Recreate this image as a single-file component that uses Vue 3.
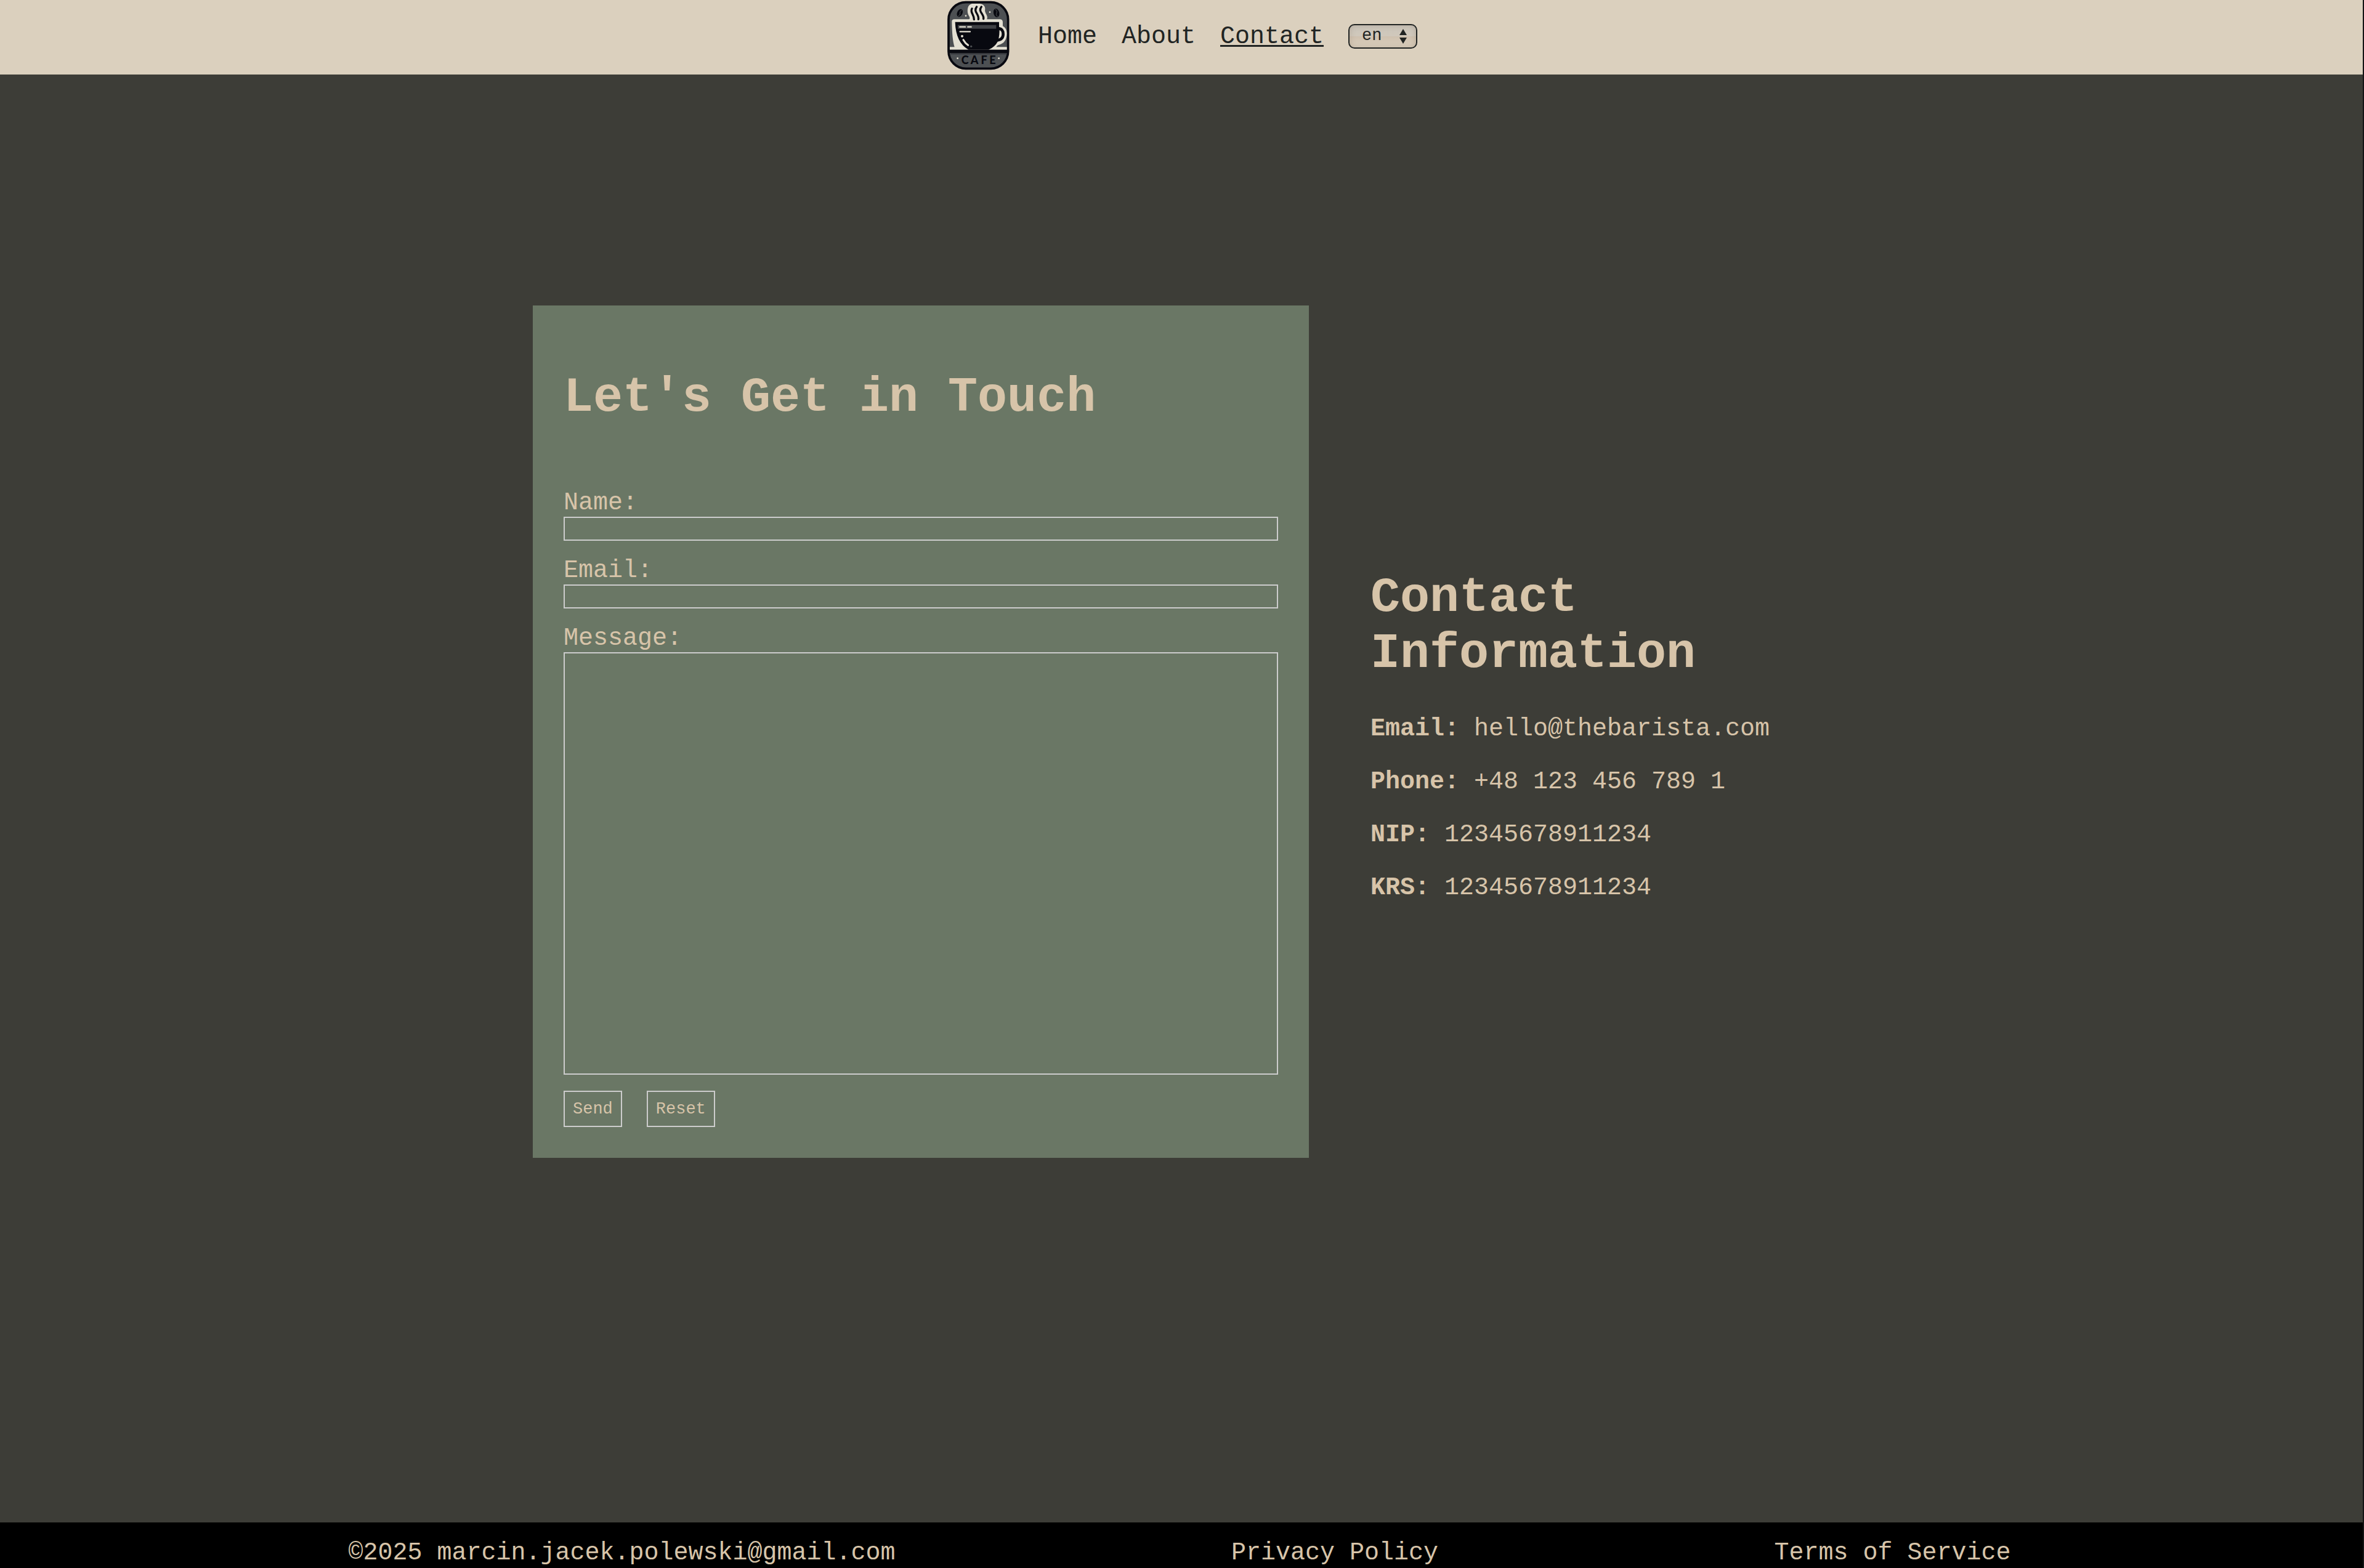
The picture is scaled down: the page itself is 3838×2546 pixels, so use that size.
<script setup>
import { ref } from 'vue'

const links = [
  { label: 'Home', href: '#home' },
  { label: 'About', href: '#about' },
  { label: 'Contact', href: '#contact', active: true },
]
const languages = ['en', 'pl']
const language = ref('en')

const details = [
  { label: 'Email', value: 'hello@thebarista.com' },
  { label: 'Phone', value: '+48 123 456 789 1' },
  { label: 'NIP', value: '12345678911234' },
  { label: 'KRS', value: '12345678911234' },
]

const form = ref({ name: '', email: '', message: '' })
</script>

<template>
  <div class="page">
    <header class="navbar">
      <svg class="logo" viewBox="48 0 330 360" role="img" aria-label="Cafe">
        <rect x="63" y="14" width="290" height="323" rx="84" fill="#4d5053" stroke="#080910" stroke-width="11" />
        <path
          d="M69 232 H92 Q80 195 79 108 Q79 97 91 97 H163 Q170 92 162 80 Q153 66 156 46 Q158 26 177 21 H215 Q238 23 241 44 Q238 56 244 68 Q255 84 250 97 H315 Q326 98 327 110 V130 Q346 140 347 165 Q346 212 309 221 Q301 222 295 232 H347 V246 H69 Z"
          fill="#e4e0d3"
        />
        <path d="M95 110 H309 V134 Q336 138 336 169 Q336 202 302 206 Q289 231 258 245 H160 Q98 210 95 110 Z" fill="#080910" />
        <path d="M311 150 Q322 153 322 169 Q322 186 307 191 Q311 171 311 150 Z" fill="#e4e0d3" />
        <rect x="108" y="125" width="187" height="18" fill="#3f4145" />
        <rect x="66" y="245" width="284" height="16" fill="#080910" />
        <path d="M72 261 H345 V268 H74 Z" fill="#35373c" />
        <g fill="none" stroke="#e4e0d3" stroke-linecap="round">
          <path d="M118 134 H144 M157 134 H173 M119 157 H168" stroke-width="7" />
          <path d="M135 197 Q144 213 158 223" stroke-width="9" />
        </g>
        <circle cx="129" cy="179" r="6" fill="#e4e0d3" />
        <circle cx="173" cy="229" r="5" fill="#4d5053" />
        <g fill="none" stroke="#080910" stroke-width="10" stroke-linecap="round">
          <path d="M177 45 C166 63 188 73 187 98" />
          <path d="M200 36 C181 61 214 72 208 97" />
          <path d="M223 36 C204 60 238 72 233 95" />
        </g>
        <g fill="#080910">
          <ellipse cx="118" cy="66" rx="13" ry="20" transform="rotate(25 118 66)" />
          <ellipse cx="296" cy="66" rx="14" ry="21" transform="rotate(-15 296 66)" />
        </g>
        <g fill="none" stroke="#4d5053" stroke-width="3">
          <path d="M127 52 Q114 62 119 68 Q121 75 109 82" />
          <path d="M292 48 Q303 60 297 67 Q291 73 301 84" />
        </g>
        <g fill="#e4e0d3">
          <circle cx="147" cy="80" r="4" />
          <circle cx="264" cy="62" r="4" />
          <circle cx="107" cy="287" r="4" />
          <circle cx="308" cy="287" r="4" />
        </g>
        <g class="logo-text" fill="#080910" text-anchor="middle">
          <text x="143" y="316">C</text>
          <text x="189" y="316">A</text>
          <text x="236" y="316">F</text>
          <text x="277" y="316">E</text>
        </g>
      </svg>
      <nav class="links">
        <a v-for="link in links" :key="link.label" :href="link.href" :class="{ active: link.active }">{{ link.label }}</a>
      </nav>
      <div class="language">
        <select v-model="language" aria-label="Language">
          <option v-for="code in languages" :key="code" :value="code">{{ code }}</option>
        </select>
        <svg class="arrows" viewBox="0 0 12 24" aria-hidden="true">
          <path d="M6 0 L12 10 H0 Z M0 14 H12 L6 24 Z" fill="#212423" />
        </svg>
      </div>
    </header>

    <main class="content">
      <div class="columns">
        <section class="card">
          <h1>Let's Get in Touch</h1>
          <form @submit.prevent>
            <div class="field">
              <label for="name">Name:</label>
              <input id="name" v-model="form.name" type="text" />
            </div>
            <div class="field">
              <label for="email">Email:</label>
              <input id="email" v-model="form.email" type="email" />
            </div>
            <div class="field">
              <label for="message">Message:</label>
              <textarea id="message" v-model="form.message"></textarea>
            </div>
            <div class="actions">
              <button type="submit">Send</button>
              <button type="reset">Reset</button>
            </div>
          </form>
        </section>
        <section class="info">
          <h1>Contact Information</h1>
          <p v-for="item in details" :key="item.label"><strong>{{ item.label }}:</strong> {{ item.value }}</p>
        </section>
      </div>
    </main>

    <footer class="footer">
      <span>©2025 marcin.jacek.polewski@gmail.com</span>
      <a href="#privacy">Privacy Policy</a>
      <a href="#terms">Terms of Service</a>
    </footer>
  </div>
</template>

<style>
body {
  margin: 0;
  background: #3d3d37;
}
</style>

<style scoped>
.page {
  box-sizing: border-box;
  display: flex;
  flex-direction: column;
  min-height: 100vh;
  border-right: 2px solid #141414;
  background: #3d3d37;
  color: #d7c4a9;
  font-family: "Courier New", "Liberation Mono", monospace;
  font-size: 40px;
  line-height: 45px;
}

.page * {
  box-sizing: border-box;
}

a {
  color: inherit;
  text-decoration: none;
}

.navbar {
  display: flex;
  align-items: center;
  justify-content: center;
  gap: 40px;
  height: 121px;
  padding-bottom: 3px;
  background: #dbd0be;
  color: #212423;
}

.logo {
  width: 110px;
  height: 120px;
}

.logo-text {
  font-family: Lato, "Open Sans", sans-serif;
  font-size: 54px;
  font-weight: 900;
}

.links {
  display: flex;
  gap: 40px;
}

.links .active {
  text-decoration: underline;
  text-decoration-thickness: 3px;
  text-underline-offset: 3px;
}

.language {
  position: relative;
  display: flex;
}

select {
  width: 112px;
  height: 40px;
  padding: 0 20px 3px;
  border: 2px solid #212423;
  border-radius: 10px;
  appearance: none;
  background: linear-gradient(#cbc5bb, #d0c8bb 50%, #cfc1af 51%, #dbd0be);
  box-shadow: inset 0 0 10px rgba(120, 100, 80, 0.3);
  color: #212423;
  font-family: inherit;
  font-size: 27px;
}

.arrows {
  position: absolute;
  top: 8px;
  right: 17px;
  width: 12px;
  height: 24px;
  pointer-events: none;
}

.content {
  display: flex;
  flex: 1;
  align-items: center;
  justify-content: center;
  padding: 0 50px 217px;
}

.columns {
  display: flex;
  align-items: center;
  width: 100%;
  max-width: 2106px;
}

h1 {
  margin: 54px 0;
  font-size: 80px;
  line-height: 91px;
}

.card {
  flex: 0 0 1260px;
  padding: 50px;
  background: #6a7765;
}

form {
  padding-top: 49px;
}

.field {
  display: flex;
  flex-direction: column;
  margin-bottom: 26px;
}

input,
textarea,
button {
  border: 2px solid #cccccc;
  border-radius: 0;
  background: transparent;
  color: inherit;
  font-family: inherit;
  font-size: 27px;
}

input {
  height: 39px;
  padding: 2px 4px;
}

textarea {
  height: 686px;
  padding: 4px;
  resize: none;
}

.actions {
  display: flex;
  gap: 40px;
}

button {
  height: 59px;
  padding: 0 13px;
}

.info {
  flex: 1;
  padding-left: 100px;
}

.info p {
  margin: 40px 0;
  line-height: 46px;
}

.footer {
  display: flex;
  justify-content: space-evenly;
  padding: 27px 26px 2px 20px;
  background: #000000;
}
</style>
